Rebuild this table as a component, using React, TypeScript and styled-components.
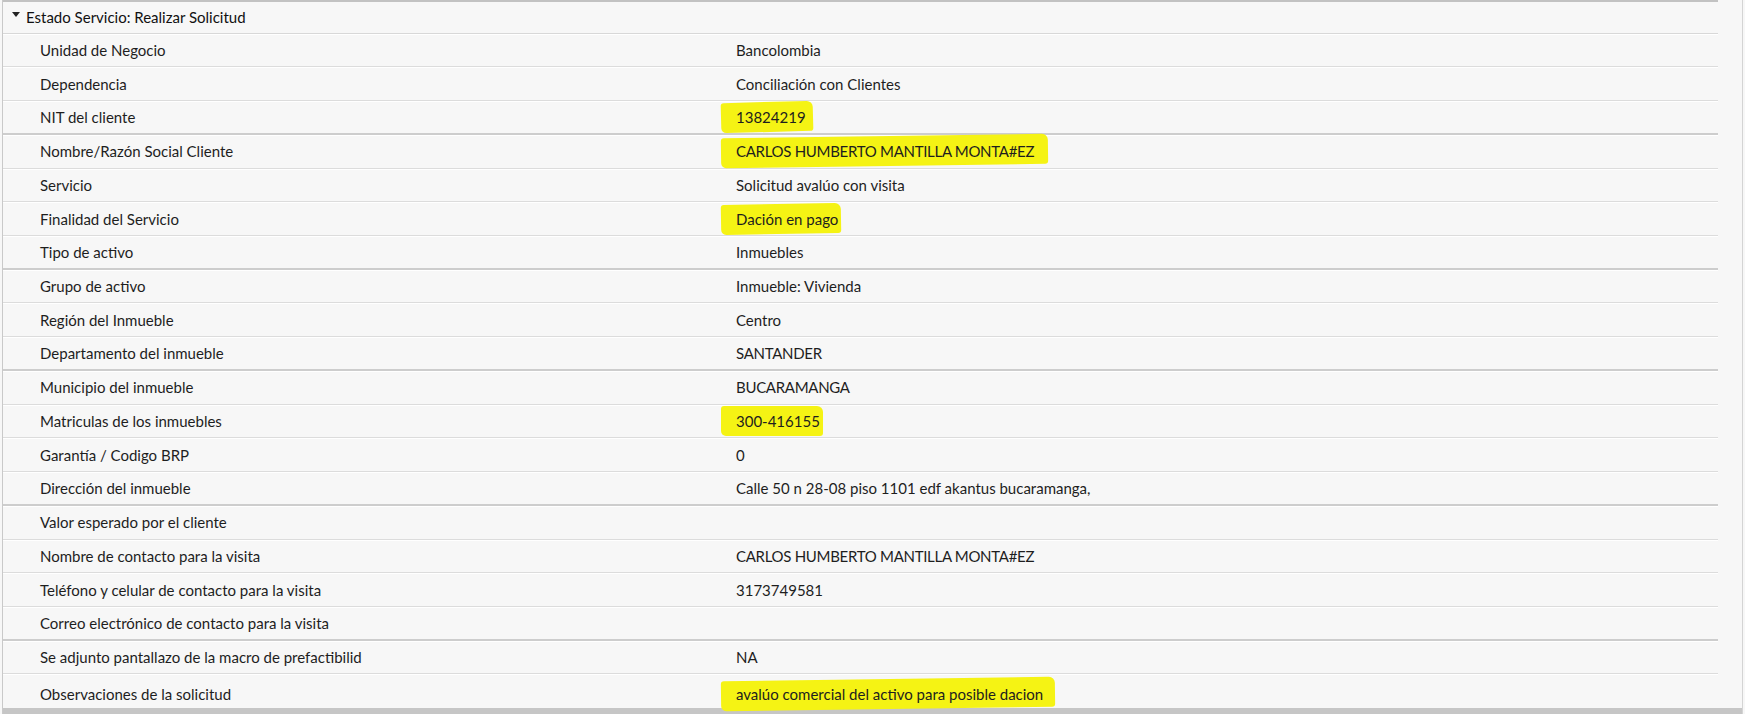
import React from "react";
import styled, { createGlobalStyle } from "styled-components";

const Global = createGlobalStyle`
  html, body { margin: 0; padding: 0; background: #f7f7f7; }
  body { font-family: Lato, "Liberation Sans", sans-serif; color: #1e1e1e; }
`;

const Panel = styled.div`
  width: 1745px;
  height: 714px;
  box-sizing: border-box;
  background: #f7f7f7;
  padding-left: 2px;
  padding-right: 2px;
  overflow: hidden;
`;

const Frame = styled.div`
  height: 100%;
  box-sizing: border-box;
  border-left: 1px solid #c9c9c9;
  border-right: 1px solid #d4d4d4;
  display: flex;
  flex-direction: column;
`;

const Header = styled.div`
  height: 33.8px;
  box-sizing: border-box;
  margin-right: 24px;
  border-top: 2px solid #c2c2c2;
  border-bottom: 1px solid #d8d8d8;
  box-shadow: 0 1px 0 #ffffff;
  display: flex;
  align-items: center;
  padding-left: 9px;
  gap: 6px;
  font-size: 15px;
  color: #111;
`;

const Caret = styled.span`
  width: 0;
  height: 0;
  border-left: 4px solid transparent;
  border-right: 4px solid transparent;
  border-top: 5px solid #222;
  margin-top: -5px;
`;

const Row = styled.div<{ $strong?: boolean; $last?: boolean }>`
  height: 33.8px;
  box-sizing: border-box;
  margin-right: 24px;
  display: grid;
  grid-template-columns: 696px 1fr;
  align-items: center;
  padding-left: 37px;
  font-size: 15px;
  border-bottom: ${(p) =>
    p.$last ? "6px solid #c6c6c6" : p.$strong ? "2px solid #cdcdcd" : "1px solid #dcdcdc"};
  box-shadow: ${(p) => (p.$last ? "none" : "0 1px 0 #ffffff")};
  ${(p) => (p.$last ? "margin-right: 0; padding-top: 6px; height: 39.8px;" : "")}
`;

const Label = styled.span`
  color: #1e1e1e;
  white-space: nowrap;
`;

const Value = styled.span<{ $caps?: boolean }>`
  color: #1e1e1e;
  white-space: nowrap;
  letter-spacing: ${(p) => (p.$caps ? "-0.3px" : "0")};
`;

const Mark = styled.span<{ $tilt: number; $right: number }>`
  position: relative;
  display: inline-block;
  z-index: 0;
  &::before {
    content: "";
    position: absolute;
    left: -15px;
    right: ${(p) => -p.$right}px;
    top: -6px;
    bottom: -6px;
    background: #f5f314;
    border-radius: 3px 6px 3px 5px;
    transform: rotate(${(p) => p.$tilt}deg);
    z-index: -1;
  }
`;

type Item = { l: string; v: string; hl?: number; r?: number; strong?: boolean };

const rows: Item[] = [
  { l: "Unidad de Negocio", v: "Bancolombia" },
  { l: "Dependencia", v: "Conciliación con Clientes" },
  { l: "NIT del cliente", v: "13824219", hl: -1.5, r: 7, strong: true },
  { l: "Nombre/Razón Social Cliente", v: "CARLOS HUMBERTO MANTILLA MONTA#EZ", hl: -0.8, r: 14 },
  { l: "Servicio", v: "Solicitud avalúo con visita" },
  { l: "Finalidad del Servicio", v: "Dación en pago", hl: -1, r: 3 },
  { l: "Tipo de activo", v: "Inmuebles", strong: true },
  { l: "Grupo de activo", v: "Inmueble: Vivienda" },
  { l: "Región del Inmueble", v: "Centro" },
  { l: "Departamento del inmueble", v: "SANTANDER", strong: true },
  { l: "Municipio del inmueble", v: "BUCARAMANGA" },
  { l: "Matriculas de los inmuebles", v: "300-416155", hl: 0, r: 3 },
  { l: "Garantía / Codigo BRP", v: "0" },
  { l: "Dirección del inmueble", v: "Calle 50 n 28-08 piso 1101 edf akantus bucaramanga,", strong: true },
  { l: "Valor esperado por el cliente", v: "" },
  { l: "Nombre de contacto para la visita", v: "CARLOS HUMBERTO MANTILLA MONTA#EZ" },
  { l: "Teléfono y celular de contacto para la visita", v: "3173749581" },
  { l: "Correo electrónico de contacto para la visita", v: "", strong: true },
  { l: "Se adjunto pantallazo de la macro de prefactibilid", v: "NA" },
  { l: "Observaciones de la solicitud", v: "avalúo comercial del activo para posible dacion", hl: -0.8, r: 12 },
];

export default function App() {
  return (
    <>
      <Global />
      <Panel>
        <Frame>
          <Header>
            <Caret />
            <span>Estado Servicio: Realizar Solicitud</span>
          </Header>
          {rows.map((r, i) => {
            const caps = r.v !== "" && r.v === r.v.toUpperCase() && /[A-Z]{4}/.test(r.v);
            return (
              <Row key={i} $strong={r.strong} $last={i === rows.length - 1}>
                <Label>{r.l}</Label>
                <Value $caps={caps}>
                  {r.hl !== undefined ? (
                    <Mark $tilt={r.hl} $right={r.r ?? 6}>
                      {r.v}
                    </Mark>
                  ) : (
                    r.v
                  )}
                </Value>
              </Row>
            );
          })}
        </Frame>
      </Panel>
    </>
  );
}
